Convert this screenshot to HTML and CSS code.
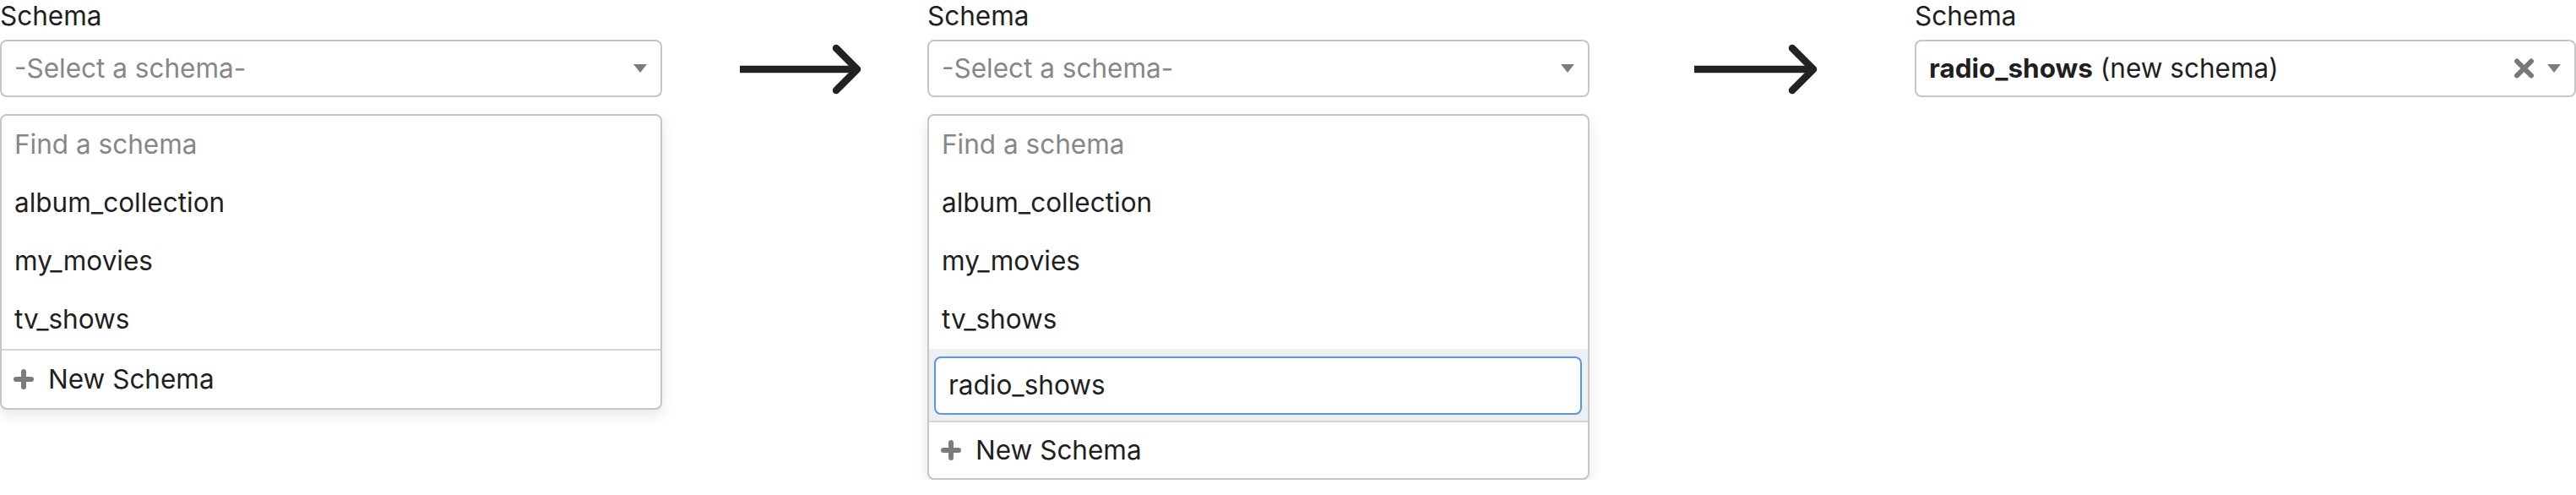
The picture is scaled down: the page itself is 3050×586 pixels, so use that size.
FILE: index.html
```html
<!DOCTYPE html>
<html lang="en">
<head>
<meta charset="utf-8">
<title>Schema picker flow</title>
<link rel="stylesheet" href="styles.css">
</head>
<body>
<div class="flow">
  <section class="step step-1">
    <div class="field-label">Schema</div>
    <div class="select">
      <span class="placeholder">-Select a schema-</span>
      <span class="caret"></span>
    </div>
    <div class="menu">
      <div class="row search">Find a schema</div>
      <div class="row">album_collection</div>
      <div class="row">my_movies</div>
      <div class="row">tv_shows</div>
      <div class="row new-item">
        <svg class="plus" width="24" height="24" viewBox="0 0 24 24"><path d="M12 3v18M3 12h18" stroke="#7b7b80" stroke-width="6" stroke-linecap="round" fill="none"/></svg>
        <span>New Schema</span>
      </div>
    </div>
  </section>

  <svg class="arrow arrow-1" width="146" height="70" viewBox="0 0 146 70"><path d="M0 35H138" stroke="#222" stroke-width="8.5" fill="none"/><path d="M114 10L139 35L114 60" stroke="#222" stroke-width="8.5" stroke-linecap="round" stroke-linejoin="round" fill="none"/></svg>

  <section class="step step-2">
    <div class="field-label">Schema</div>
    <div class="select">
      <span class="placeholder">-Select a schema-</span>
      <span class="caret"></span>
    </div>
    <div class="menu">
      <div class="row search">Find a schema</div>
      <div class="row">album_collection</div>
      <div class="row">my_movies</div>
      <div class="row">tv_shows</div>
      <div class="editing">
        <div class="edit-input">radio_shows</div>
      </div>
      <div class="row new-item short">
        <svg class="plus" width="24" height="24" viewBox="0 0 24 24"><path d="M12 3v18M3 12h18" stroke="#7b7b80" stroke-width="6" stroke-linecap="round" fill="none"/></svg>
        <span>New Schema</span>
      </div>
    </div>
  </section>

  <svg class="arrow arrow-2" width="146" height="70" viewBox="0 0 146 70"><path d="M0 35H140" stroke="#222" stroke-width="8.5" fill="none"/><path d="M116 10L141 35L116 60" stroke="#222" stroke-width="8.5" stroke-linecap="round" stroke-linejoin="round" fill="none"/></svg>

  <section class="step step-3">
    <div class="field-label">Schema</div>
    <div class="select">
      <span class="value"><strong>radio_shows</strong> (new schema)</span>
      <svg class="clear" width="25" height="24" viewBox="0 0 25 24"><path d="M4 3.5L21 20.5M21 3.5L4 20.5" stroke="#77777c" stroke-width="6" stroke-linecap="round" fill="none"/></svg>
      <span class="caret"></span>
    </div>
  </section>
</div>
</body>
</html>
```

FILE: styles.css
```css
html, body {
  margin: 0;
  padding: 0;
  background: #ffffff;
}

body {
  font-family: Inter, "Noto Sans", "Liberation Sans", sans-serif;
  font-size: 31.5px;
  color: #1f1f21;
}

.flow {
  display: flex;
  align-items: flex-start;
  width: 3050px;
}

.step {
  flex: none;
  width: 784px;
}

.step-3 {
  width: 783px;
}

.arrow {
  flex: none;
  display: block;
  margin-top: 47px;
}

.arrow-1 {
  margin-left: 92px;
  margin-right: 76px;
}

.arrow-2 {
  margin-left: 124px;
  margin-right: 115px;
}

.field-label {
  height: 38px;
  line-height: 38px;
  margin-bottom: 9px;
  color: #1f1f21;
}

.select {
  box-sizing: border-box;
  height: 68px;
  border: 2px solid #c5c5ca;
  border-radius: 8px;
  display: flex;
  align-items: center;
  padding: 0 16px 2px 15px;
}

.placeholder {
  flex: 1;
  color: #86868b;
}

.value {
  flex: 1;
  color: #1f1f21;
}

.value strong {
  font-weight: 700;
}

.caret {
  width: 0;
  height: 0;
  margin-top: 2px;
  border-left: 8px solid transparent;
  border-right: 8px solid transparent;
  border-top: 10px solid #7b7b80;
}

.clear {
  display: block;
  margin-top: 2px;
  margin-right: 15px;
}

.menu {
  margin-top: 20px;
  border: 2px solid #c5c5ca;
  border-radius: 8px;
  box-shadow: 0 6px 16px rgba(0, 0, 0, 0.10);
  background: #fff;
}

.row {
  box-sizing: border-box;
  height: 69px;
  display: flex;
  align-items: center;
  padding-left: 15px;
  padding-bottom: 2px;
}

.search {
  color: #86868b;
}

.new-item {
  height: 70px;
  border-top: 2px solid #d6d6da;
  padding-left: 14px;
}

.new-item.short {
  height: 68px;
}

.plus {
  display: block;
  margin-top: 2px;
  margin-right: 17px;
}

.editing {
  background: #edf0f3;
  padding: 9px 7px 7px 6px;
}

.edit-input {
  box-sizing: border-box;
  height: 69px;
  border: 2px solid #5596ee;
  border-radius: 8px;
  background: #fff;
  display: flex;
  align-items: center;
  padding-left: 15px;
  padding-bottom: 2px;
}
```
